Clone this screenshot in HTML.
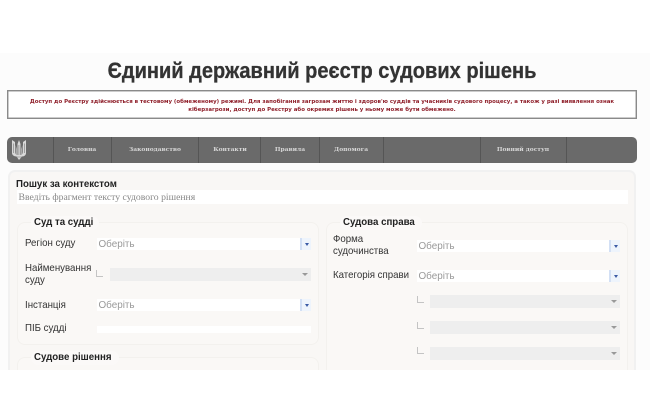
<!DOCTYPE html>
<html lang="uk"><head><meta charset="utf-8"><title>Єдиний державний реєстр судових рішень</title>
<style>
html,body{margin:0;padding:0;background:#fff}
body{width:650px;height:420px;overflow:hidden;position:relative;font-family:"Liberation Sans",sans-serif}
#w{position:absolute;left:0;top:0;width:650px;height:420px;filter:blur(.35px)}
#p{position:absolute;left:0;top:53px;width:650px;height:317px;background:#fcfcfc;overflow:hidden}
.a{position:absolute;white-space:nowrap}
h1{position:absolute;margin:0;left:0;top:60px;width:644px;text-align:center;font:bold 22.5px/22px "Liberation Sans",sans-serif;color:#333;white-space:nowrap;transform:scaleX(.89);transform-origin:322px 0;-webkit-text-stroke:.3px #333}
.n{position:absolute;left:7px;top:90px;width:628px;height:19px;border:1px solid #8a8a8a;box-shadow:inset 0 0 0 .5px #999;background:#fff;text-align:center;font:bold 5.45px/7.5px "DejaVu Sans",sans-serif;color:#8f1f2a;padding-top:8px}
.nav{position:absolute;left:7px;top:137px;width:630px;height:26px;background:#6a6a6a;border-radius:5px}
.nav i{position:absolute;top:0;width:1px;height:26px;background:#555}
.nav b{position:absolute;top:9px;font:bold 5.95px/8px "DejaVu Serif",serif;color:#d6d6d6;white-space:nowrap;transform:translateX(-50%)}
.panel{position:absolute;left:8px;top:170px;width:624px;height:220px;background:#f9f7f5;border:2px solid #f1f1f1;border-radius:7px}
.fs{position:absolute;border:1px solid #f3f1ee;border-radius:8px;background:#faf8f6}
.lg{position:absolute;font:bold 10.2px/14px "Liberation Sans",sans-serif;color:#222;background:#fbf9f8;padding:0 3px;border-radius:7px;white-space:nowrap}
.lg span,.l span{display:inline-block;transform:scaleX(.95);transform-origin:0 0}
.l{position:absolute;font:10.2px/12px "Liberation Sans",sans-serif;color:#333;white-space:nowrap}
.s{position:absolute;height:12px;background:#fff;font:9.9px/13px "Liberation Sans",sans-serif;color:#999;text-indent:1.5px}
.s u{position:absolute;right:0;top:0;width:11px;height:12px;background:#eef4fc;border-left:2px solid #d3e0f5;box-sizing:border-box}
.s u:after{content:"";position:absolute;left:2.500px;top:5px;border:2.500px solid transparent;border-top:3px solid #3a5aa5;border-bottom:0}
.d{position:absolute;height:13px;background:#eeeeee}
.d:after{content:"";position:absolute;right:3px;top:5px;border:3px solid transparent;border-top:3.500px solid #999;border-bottom:0}
.c{position:absolute;width:6px;height:6px;border-left:1px solid #c4c4c4;border-bottom:1px solid #c4c4c4}
</style></head><body>
<div id="w">
<div id="p"></div>
<h1>Єдиний державний реєстр судових рішень</h1>
<div class="n">Доступ до Реєстру здійснюється в тестовому (обмеженому) режимі. Для запобігання загрозам життю і здоров'ю суддів та учасників судового процесу, а також у разі виявлення ознак<br>кіберзагрози, доступ до Реєстру або окремих рішень у ньому може бути обмежено.</div>
<div class="nav">
<svg style="position:absolute;left:4px;top:2px" width="16" height="22" viewBox="0 0 16 22"><path d="M1 1 4 3v10c0 1.500.8 2.500 2.500 3L6.500 5 8 1l1.500 4-.1 11c1.700-.5 2.600-1.500 2.600-3V3l3-2v13c0 2-1.500 3.500-4 3.500L8 21l-2.500-3.500c-2.500 0-4.500-1.500-4.500-3.500Z" fill="#d8d8d8"/><path d="M4.500 13.500V6l1.500 4v6c-1-.5-1.500-1.300-1.500-2.500ZM11.500 13.500V6L10 10v6c1-.5 1.500-1.300 1.500-2.500Z" fill="#aaa"/><path d="M2.500 4.500v9.500M13.500 4.500v9.500M7.900 6v10M5 18h6" stroke="#777" stroke-width=".6" fill="none"/></svg>
<i style="left:46px"></i><i style="left:104px"></i><i style="left:191px"></i><i style="left:253px"></i><i style="left:312px"></i><i style="left:376px"></i><i style="left:473px"></i><i style="left:559px"></i>
<b style="left:75px">Головна</b><b style="left:148px">Законодавство</b><b style="left:223px">Контакти</b><b style="left:283px">Правила</b><b style="left:344px">Допомога</b><b style="left:516px">Повний доступ</b>
</div>
<div style="position:absolute;left:0;top:0;width:650px;height:370px;overflow:hidden">
<div class="panel"></div>
<div class="a" style="left:16px;top:179px;font:bold 10.2px/12px 'Liberation Sans',sans-serif;color:#222;transform:scaleX(.95);transform-origin:0 0">Пошук за контекстом</div>
<div class="a" style="left:17px;top:190px;width:611px;height:14px;background:#fff;font:9.7px/15px 'Liberation Serif',serif;color:#888;text-indent:1.500px">Введіть фрагмент тексту судового рішення</div>

<div class="fs" style="left:17px;top:222px;width:300px;height:121px"></div>
<div class="lg" style="left:31px;top:216px"><span>Суд та судді</span></div>
<div class="l" style="left:24.500px;top:238px"><span>Регіон суду</span></div>
<div class="s" style="left:97px;top:238px;width:214px">Оберіть<u></u></div>
<div class="l" style="left:24.500px;top:263px"><span>Найменування<br>суду</span></div>
<div class="c" style="left:96px;top:270px"></div>
<div class="d" style="left:110px;top:268px;width:201px"></div>
<div class="l" style="left:24.500px;top:299.500px"><span>Інстанція</span></div>
<div class="s" style="left:97px;top:299px;width:214px">Оберіть<u></u></div>
<div class="l" style="left:24.500px;top:323px"><span>ПІБ судді</span></div>
<div class="s" style="left:97px;top:326px;width:214px;height:7px"></div>

<div class="fs" style="left:17px;top:357px;width:300px;height:40px"></div>
<div class="lg" style="left:31px;top:351px"><span>Судове рішення</span></div>

<div class="fs" style="left:326px;top:222px;width:300px;height:170px"></div>
<div class="lg" style="left:340px;top:216px"><span>Судова справа</span></div>
<div class="l" style="left:333px;top:234px"><span>Форма<br>судочинства</span></div>
<div class="s" style="left:417px;top:240px;width:203px">Оберіть<u></u></div>
<div class="l" style="left:333px;top:270px"><span>Категорія справи</span></div>
<div class="s" style="left:417px;top:270px;width:203px">Оберіть<u></u></div>
<div class="c" style="left:417px;top:296px"></div>
<div class="d" style="left:430px;top:295px;width:190px"></div>
<div class="c" style="left:417px;top:322px"></div>
<div class="d" style="left:430px;top:321px;width:190px"></div>
<div class="c" style="left:417px;top:347px"></div>
<div class="d" style="left:430px;top:347px;width:190px"></div>
</div>
</div>
</body></html>
